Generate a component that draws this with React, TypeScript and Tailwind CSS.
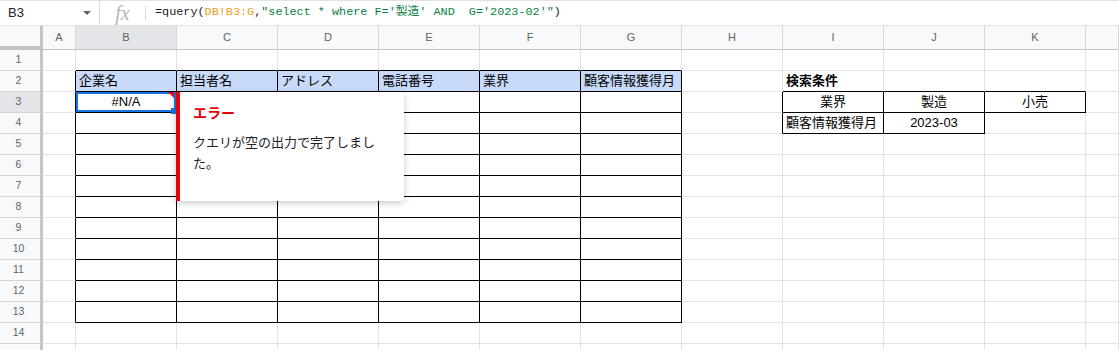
import React from "react";

const COLS = ["A", "B", "C", "D", "E", "F", "G", "H", "I", "J", "K", "L"];
const ROWS = Array.from({ length: 15 }, (_, i) => i + 1);

type Cell = { text: string; center?: boolean; bold?: boolean; fill?: boolean };

const cells: Record<string, Cell> = {
  B2: { text: "企業名", fill: true },
  C2: { text: "担当者名", fill: true },
  D2: { text: "アドレス", fill: true },
  E2: { text: "電話番号", fill: true },
  F2: { text: "業界", fill: true },
  G2: { text: "顧客情報獲得月", fill: true },
  B3: { text: "#N/A", center: true },
  I2: { text: "検索条件", bold: true },
  I3: { text: "業界", center: true },
  J3: { text: "製造", center: true },
  K3: { text: "小売", center: true },
  I4: { text: "顧客情報獲得月" },
  J4: { text: "2023-03", center: true },
};

// cells that carry a black border
const boxed = (c: number, r: number) =>
  (c >= 1 && c <= 6 && r >= 2 && r <= 13) ||
  (r === 3 && c >= 8 && c <= 10) ||
  (r === 4 && c >= 8 && c <= 9);

const colWidth = (c: number) => (c === 0 || c === 11 ? "w-[33px]" : "w-[101px]");

const font = { fontFamily: '"Liberation Sans", Arial, "Noto Sans CJK JP", sans-serif' };

function FormulaBar() {
  return (
    <div className="flex h-[26px] items-center border-t border-b border-[#e1e1e1] bg-white">
      <div className="flex h-full w-[100px] items-center justify-between border-r border-[#dadce0] pl-2 pr-[8px]">
        <span className="text-[13px] text-[#202124]">B3</span>
        <span className="h-0 w-0 border-x-[4px] border-t-[4px] border-x-transparent border-t-[#5f6368]" />
      </div>
      <div className="flex w-[45px] items-center justify-center">
        <span
          className="text-[20px] italic leading-none text-[#b5b5b5]"
          style={{ fontFamily: '"Liberation Serif", "DejaVu Serif", serif' }}
        >
          fx
        </span>
      </div>
      <div className="h-[16px] w-px bg-[#dadce0]" />
      <div
        className="whitespace-pre pl-[9px] text-[11.8px] text-[#202124]"
        style={{ fontFamily: '"Liberation Mono", "Noto Sans CJK JP", monospace' }}
      >
        =query(<span className="text-[#f29b1d]">DB!B3:G</span>,
        <span className="text-[#0b8043]">{"\"select * where F='製造' AND  G='2023-02'\""}</span>)
      </div>
    </div>
  );
}

function ErrorTip() {
  return (
    <div className="absolute left-[100px] top-0 z-20 h-[109px] w-[228px] rounded-r-[4px] border-l-4 border-[#e8000b] bg-white pl-[13px] pt-[12px] shadow-[0_2px_7px_rgba(0,0,0,0.22)]">
      <div className="text-[14px] font-bold leading-[18px] text-[#e8000b]">エラー</div>
      <div className="mt-[10px] w-[190px] text-[13px] leading-[21px] text-[#202124]">
        クエリが空の出力で完了しました。
      </div>
    </div>
  );
}

function GridCell({ c, r }: { c: number; r: number }) {
  const key = COLS[c] + r;
  const cell = cells[key];
  const right = boxed(c, r) || boxed(c + 1, r) ? "border-r-black" : "border-r-[#e2e3e3]";
  const bottom = boxed(c, r) || boxed(c, r + 1) ? "border-b-black" : "border-b-[#e2e3e3]";
  const selected = key === "B3";
  return (
    <div
      className={`${colWidth(c)} ${right} ${bottom} ${cell?.fill ? "bg-[#c9daf8]" : "bg-white"} ${
        selected ? "relative" : ""
      } flex h-[21px] shrink-0 items-center border-r border-b px-[3px] text-[13px] text-black`}
    >
      {cell && (
        <span
          className={`${cell.center ? "w-full text-center" : ""} ${
            cell.bold ? "font-bold" : ""
          } overflow-hidden whitespace-nowrap`}
        >
          {cell.text}
        </span>
      )}
      {selected && (
        <>
          <div className="absolute inset-0 border-2 border-[#1a73e8]" />
          <div className="absolute right-[2px] top-0 h-0 w-0 border-l-[6px] border-t-[6px] border-l-transparent border-t-[#e8000b]" />
          <div className="absolute bottom-[-2px] right-[0px] h-[6px] w-[5px] bg-[#1a73e8]" />
          <ErrorTip />
        </>
      )}
    </div>
  );
}

export default function App() {
  return (
    <div className="h-[350px] w-[1119px] overflow-hidden bg-white" style={font}>
      <FormulaBar />
      {/* column headers */}
      <div className="flex h-[24px]">
        <div className="h-full w-[43px] shrink-0 border-r-[3px] border-b-[4px] border-r-[#c4c4c4] border-b-[#c4c4c4] bg-[#f8f9fa]" />
        {COLS.map((col, c) => (
          <div
            key={col}
            className={`${colWidth(c)} ${
              col === "B" ? "bg-[#e3e5e8]" : "bg-[#f8f9fa]"
            } flex h-full shrink-0 items-center justify-center border-r border-b border-r-[#d6d6d6] border-b-[#c4c4c4] text-[11px] text-[#5f6368]`}
          >
            {col === "L" ? "" : col}
          </div>
        ))}
      </div>
      {ROWS.map((r) => (
        <div key={r} className="flex">
          <div
            className={`${
              r === 3 ? "bg-[#e3e5e8]" : "bg-[#f8f9fa]"
            } flex h-[21px] w-[43px] shrink-0 items-center justify-center border-r-[3px] border-b border-r-[#c4c4c4] border-b-[#d6d6d6] pr-[3px] text-[10.5px] text-[#5f6368]`}
          >
            {r < 15 ? r : ""}
          </div>
          {COLS.map((_, c) => (
            <GridCell key={c} c={c} r={r} />
          ))}
        </div>
      ))}
    </div>
  );
}
